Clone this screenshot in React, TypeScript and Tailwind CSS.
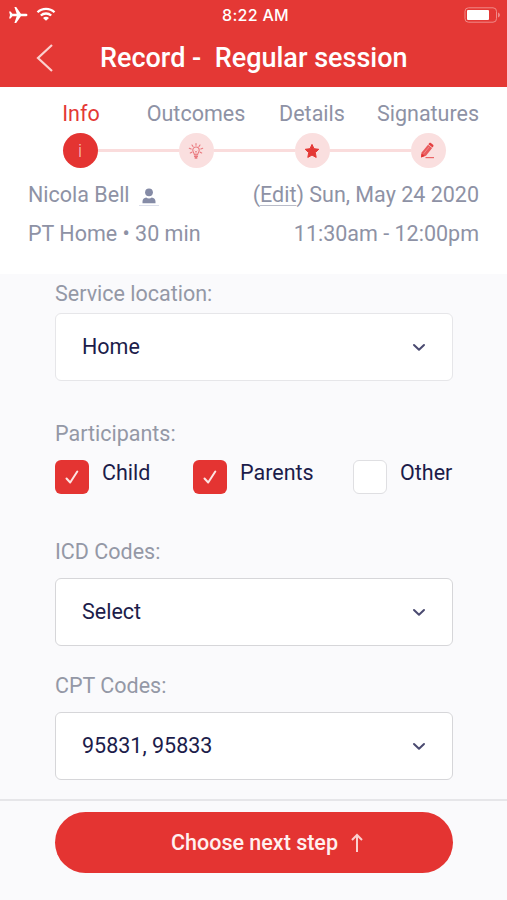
import type { ReactNode } from "react";

function Plane() {
  return (
    <svg width="20" height="18" viewBox="0 0 20 18" fill="#fff">
      <path d="M19.500 9c0 .8-.9 1.300-2 1.300h-4.600L8.200 17H6.400l2.300-6.700H4.400L2.600 12.600H1.100L2 9 1.100 5.400h1.500l1.800 2.300h4.300L6.400 1h1.800l4.700 6.700h4.600c1.100 0 2 .5 2 1.300z" />
    </svg>
  );
}

function Wifi() {
  return (
    <svg width="20" height="15" viewBox="0 0 20 15" fill="none" stroke="#fff" strokeWidth="2.300">
      <path d="M1.500 5.300c4.700-4.600 12.300-4.600 17 0" />
      <path d="M4.800 8.500c2.900-2.700 7.500-2.700 10.400 0" />
      <path d="M10 13.800 7 10.900c1.700-1.500 4.300-1.500 6 0z" fill="#fff" stroke="none" />
    </svg>
  );
}

function Battery() {
  return (
    <svg width="37" height="16" viewBox="0 0 37 16" fill="none">
      <rect x="1" y=".8" width="31.500" height="14.400" rx="3.500" stroke="#f08a88" />
      <rect x="3" y="3" width="22" height="10" rx="1" fill="#fff" />
      <path d="M34 5.500c2.600.7 2.600 4.300 0 5z" fill="#f08a88" />
    </svg>
  );
}

function Bulb() {
  return (
    <svg width="18" height="18" viewBox="0 0 18 18" fill="none" stroke="#e9787d" strokeWidth="1.100" strokeLinecap="round">
      <path d="M7.400 12.800c0-1.700-1.600-2.600-1.600-4.600a3.200 3.200 0 0 1 6.400 0c0 2-1.600 2.900-1.600 4.600z" />
      <path d="M7.800 14.300h2.400M8.400 16h1.200" strokeWidth="1.700" />
      <path d="M9 1.500v1.700M5 3l1 1.500M13 3l-1 1.500M2.300 6.300l1.900.7M15.700 6.300l-1.900.7M3.300 11l1.500-.8M14.700 11l-1.500-.8" />
      <path d="m8 9 1 1 1-1M9 10v2.500" strokeWidth=".7" />
    </svg>
  );
}

function Star() {
  return (
    <svg width="16" height="16" viewBox="0 0 16 16" fill="#e43835" stroke="#e43835" strokeLinejoin="round">
      <path d="m8 1.400 2 4.300 4.800.6-3.500 3.300.9 4.800L8 12.100l-4.200 2.300.9-4.800L1.200 6.300 6 5.700z" />
    </svg>
  );
}

function Pencil() {
  return (
    <svg width="16" height="17" viewBox="0 0 16 17">
      <path d="M1.600 10.600 8 2.800l4.200 3.100-6.200 7.900-4.800 1.500z" fill="#e95a5c" />
      <path d="m8.400 2.300.8-1c.5-.5 1.100-.6 1.700-.2l2.200 1.700c.5.4.5 1 .2 1.500l-.8 1.100z" fill="#e43f40" />
      <path d="m3.800 11.600 5.400-6.700" stroke="#f3a3a4" strokeWidth=".6" />
      <path d="m1.400 11.500 3.400 2.600-3.700 1.300z" fill="#e22f30" />
      <path d="M5.500 15.600H14" stroke="#ea6668" strokeWidth="1.200" />
    </svg>
  );
}

function Person() {
  return (
    <svg width="14" height="16" viewBox="0 0 14 16" fill="#858ba6">
      <circle cx="7" cy="4.300" r="3.900" />
      <path d="M.5 15.200v-1.700c0-2.200 1.500-3.700 3.700-4 .8.600 1.700.9 2.800.9s2-.3 2.800-.9c2.200.3 3.700 1.800 3.700 4v1.700z" />
    </svg>
  );
}

const steps: { label: string; style: string; circle: string; icon: ReactNode }[] = [
  {
    label: "Info",
    style: "text-[#e43835] pl-[2px]",
    circle: "bg-[#e43432]",
    icon: <span className="text-[18px] font-light leading-none text-[#f8c9c8]">i</span>,
  },
  { label: "Outcomes", style: "text-[#8e92a5]", circle: "bg-[#fadfdf]", icon: <Bulb /> },
  { label: "Details", style: "text-[#8e92a5]", circle: "bg-[#fadfdf]", icon: <Star /> },
  { label: "Signatures", style: "text-[#8e92a5]", circle: "bg-[#fadfdf]", icon: <Pencil /> },
];

function Stepper() {
  return (
    <div className="flex pl-[22px]">
      {steps.map((s, i) => (
        <div key={s.label} className="flex w-[116px] shrink-0 flex-col items-center">
          <span className={`h-[26px] leading-[26px] whitespace-nowrap ${s.style}`}>{s.label}</span>
          <div className="mt-[6px] flex w-full items-center">
            <div className={`h-[2.500px] flex-1 ${i > 0 ? "bg-[#fadcdc]" : ""}`} />
            <div className={`flex size-[35px] items-center justify-center rounded-full ${s.circle}`}>{s.icon}</div>
            <div className={`h-[2.500px] flex-1 ${i < 3 ? "bg-[#fadcdc]" : ""}`} />
          </div>
        </div>
      ))}
    </div>
  );
}

function Select({ value, border }: { value: string; border: string }) {
  return (
    <div className={`flex h-[68px] items-center justify-between rounded-[6px] border-[1.500px] bg-white pr-[26px] pl-[26px] text-[#1c1c4a] ${border}`}>
      <span>{value}</span>
      <svg width="14" height="9" viewBox="0 0 14 9" fill="none" stroke="#4a4a70" strokeWidth="2" strokeLinecap="round" strokeLinejoin="round">
        <path d="m2 2 5 4.800L12 2" />
      </svg>
    </div>
  );
}

function Check({ label, checked }: { label: string; checked?: boolean }) {
  return (
    <div className="flex">
      <div
        className={`flex size-[34px] items-center justify-center rounded-[6px] ${
          checked ? "bg-[#e43432]" : "border-[1.500px] border-[#dfdfe2] bg-white"
        }`}
      >
        {checked && (
          <svg width="14" height="15" viewBox="0 0 14 15" fill="none" stroke="#fde4e2" strokeWidth="2" strokeLinecap="round" strokeLinejoin="round">
            <path d="m1.500 8.500 3.700 4L12.300 1.500" />
          </svg>
        )}
      </div>
      <span className="ml-[13px] leading-[26px] text-[#1c1c4a]">{label}</span>
    </div>
  );
}

export default function App() {
  return (
    <div className="flex h-[900px] w-[507px] flex-col overflow-hidden bg-[#fafafc] font-['Roboto',sans-serif] text-[21.5px] leading-[26px] text-[#8e92a5]">
      <header className="h-[87px] shrink-0 bg-[#e43835] text-white">
        <div className="grid h-[29px] grid-cols-3 items-center pr-[6px] pl-[8px]">
          <div className="flex items-center gap-[8px]">
            <Plane />
            <Wifi />
          </div>
          <span className="pl-[2px] text-center font-['Inter',sans-serif] text-[16px] font-medium tracking-[0.3px]">8:22 AM</span>
          <div className="flex justify-end">
            <Battery />
          </div>
        </div>
        <div className="flex h-[57px] items-center pl-[36px]">
          <svg width="18" height="28" viewBox="0 0 18 28" fill="none" stroke="#fbd0cf" strokeWidth="2.200">
            <path d="M16 1 2 14l14 13" />
          </svg>
          <h1 className="ml-[46px] text-[27px] font-medium whitespace-pre">Record -  Regular session</h1>
        </div>
      </header>

      <section className="h-[187px] shrink-0 bg-white pt-[14px]">
        <Stepper />
        <div className="mt-[14px] flex justify-between px-[28px] whitespace-nowrap">
          <div className="flex">
            <span>Nicola Bell</span>
            <span className="ml-[9px] flex h-[24px] w-[20px] items-end justify-center border-b border-[#dcdfeb] pb-[1px]">
              <Person />
            </span>
          </div>
          <div>
            (<span className="underline decoration-[#b9bcc9] decoration-1 underline-offset-[3px]">Edit</span>) Sun, May 24 2020
          </div>
        </div>
        <div className="mt-[13px] flex justify-between px-[28px] whitespace-nowrap">
          <span>PT Home • 30 min</span>
          <span>11:30am - 12:00pm</span>
        </div>
      </section>

      <main className="flex h-[525px] shrink-0 flex-col pr-[54px] pl-[55px] pt-[7px] text-[#9498a6]">
        <label className="mb-[6px]">Service location:</label>
        <Select value="Home" border="border-[#e6e6e9]" />
        <label className="mt-[40px]">Participants:</label>
        <div className="mt-[13px] flex">
          <div className="w-[138px]">
            <Check label="Child" checked />
          </div>
          <div className="w-[160px]">
            <Check label="Parents" checked />
          </div>
          <Check label="Other" />
        </div>
        <label className="mt-[45px] mb-[13px]">ICD Codes:</label>
        <Select value="Select" border="border-[#d6d6d9]" />
        <label className="mt-[27px] mb-[13px]">CPT Codes:</label>
        <Select value="95831, 95833" border="border-[#d6d6d9]" />
      </main>

      <footer className="flex-1 border-t-[2px] border-[#e6e6e9] pr-[54px] pl-[55px] pt-[11px]">
        <button className="flex h-[61px] w-full items-center justify-center rounded-full bg-[#e43432] pl-[26px] font-medium text-[#fff0ef]">
          Choose next step
          <svg className="ml-[13px]" width="12" height="20" viewBox="0 0 12 20" fill="none" stroke="#fbd0cf" strokeWidth="2">
            <path d="M6 19V2M1 7l5-5 5 5" />
          </svg>
        </button>
      </footer>
    </div>
  );
}
